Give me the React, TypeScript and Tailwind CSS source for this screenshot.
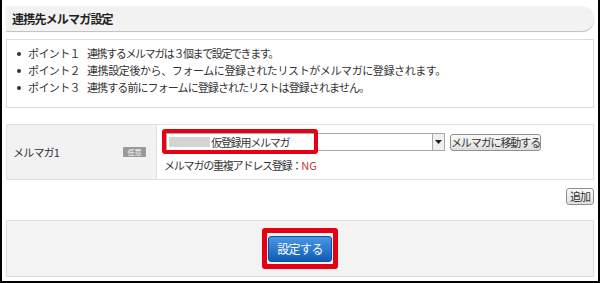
import React from "react";

const font = "font-['Meiryo','Noto_Sans_CJK_JP','Noto_Sans',sans-serif]";

function Point({ label, text, track }: { label: string; text: string; track: string }) {
  return (
    <div className="flex items-center h-[17px] whitespace-nowrap">
      <span className="w-[4px] h-[4px] rounded-full bg-[#333] mr-[7px]" />
      <span className="w-[59px] tracking-[-0.6px]">{label}</span>
      <span className={track}>{text}</span>
    </div>
  );
}

export default function App() {
  return (
    <div
      className={`${font} w-[600px] h-[283px] bg-white border-l-2 border-r-2 border-b-2 border-black pl-[4px] pr-[4px] pt-[6px] text-[11px] text-[#333] leading-none`}
    >
      {/* Header */}
      <div className="h-[25px] bg-[#f2f2f2] rounded-r-[12px] shadow-[0_1px_1px_#bdbdbd] flex items-center pl-[6px]">
        <span className="font-bold text-[12px] tracking-[-0.8px] text-[#222]">連携先メルマガ設定</span>
      </div>

      {/* Points */}
      <div className="mt-[8px] h-[69px] border border-[#dcdcdc] pl-[10px] pt-[5px]">
        <Point label="ポイント１" track="tracking-[-1.4px]" text="連携するメルマガは３個まで設定できます。" />
        <Point
          label="ポイント２"
          track="tracking-[-0.4px]"
          text="連携設定後から、フォームに登録されたリストがメルマガに登録されます。"
        />
        <Point label="ポイント３" track="tracking-[-0.9px]" text="連携する前にフォームに登録されたリストは登録されません。" />
      </div>

      {/* Table */}
      <div className="mt-[16px] h-[56px] border border-[#e0e0e0] flex">
        <div className="w-[150px] bg-[#f2f2f2] border-r border-[#e0e0e0] flex items-center justify-between pl-[6px] pr-[10px]">
          <span className="tracking-[-0.8px]">メルマガ1</span>
          <span className="bg-[#9a9a9a] text-white text-[7px] w-[23px] h-[10px] flex items-center justify-center rounded-[1px]">
            任意
          </span>
        </div>
        <div className="flex-1 pl-[9px] pt-[8px]">
          <div className="flex items-start">
            <div className="relative w-[279px] h-[18px] border border-[#a9a9a9] bg-white flex items-center">
              <span className="ml-[2px] w-[41px] h-[10px] bg-[#d4d4d4]" />
              <span className="tracking-[-1.2px] ml-[1px]">仮登録用メルマガ</span>
              <span className="ml-auto w-[12px] h-[16px] border-l border-[#a9a9a9] bg-[#f0f0f0] flex items-center justify-center">
                <svg width="7" height="4" viewBox="0 0 7 4">
                  <path d="M0 0h7L3.5 4z" fill="#222" />
                </svg>
              </span>
              <span className="absolute left-[-5px] top-[-5px] w-[156px] h-[25px] border-[4px] border-[#e60012] rounded-[3px]" />
            </div>
            <button className="ml-[5px] mt-[1px] h-[17px] w-[91px] border border-[#8f8f8f] rounded-[3px] bg-gradient-to-b from-[#fafafa] to-[#dedede] text-[11px] text-[#333] tracking-[-1.1px] whitespace-nowrap flex items-center justify-center leading-none">
              メルマガに移動する
            </button>
          </div>
          <div className="mt-[9px] -ml-[2px] tracking-[-1.2px] whitespace-nowrap">
            メルマガの重複アドレス登録：<span className="text-[#c7313a] tracking-normal">NG</span>
          </div>
        </div>
      </div>

      {/* Add button */}
      <div className="mt-[8px] flex justify-end">
        <button className="h-[17px] w-[28px] border border-[#8f8f8f] rounded-[3px] bg-gradient-to-b from-[#fafafa] to-[#dedede] text-[11px] text-[#333] tracking-[-1px] whitespace-nowrap flex items-center justify-center leading-none">
          追加
        </button>
      </div>

      {/* Submit panel */}
      <div className="mt-[15px] h-[57px] bg-[#f3f3f3] border border-[#dcdcdc] flex items-center justify-center">
        <div className="relative">
          <button className="w-[64px] h-[26px] rounded-[3px] border border-[#0b4f9e] bg-gradient-to-b from-[#4a97e4] to-[#0b5cb6] text-white text-[12px] tracking-[-0.6px] flex items-center justify-center leading-none">
            設定する
          </button>
          <span className="absolute left-[-6px] right-[-6px] top-[-8px] bottom-[-7px] border-[5px] border-[#e60012] rounded-[3px]" />
        </div>
      </div>
    </div>
  );
}
